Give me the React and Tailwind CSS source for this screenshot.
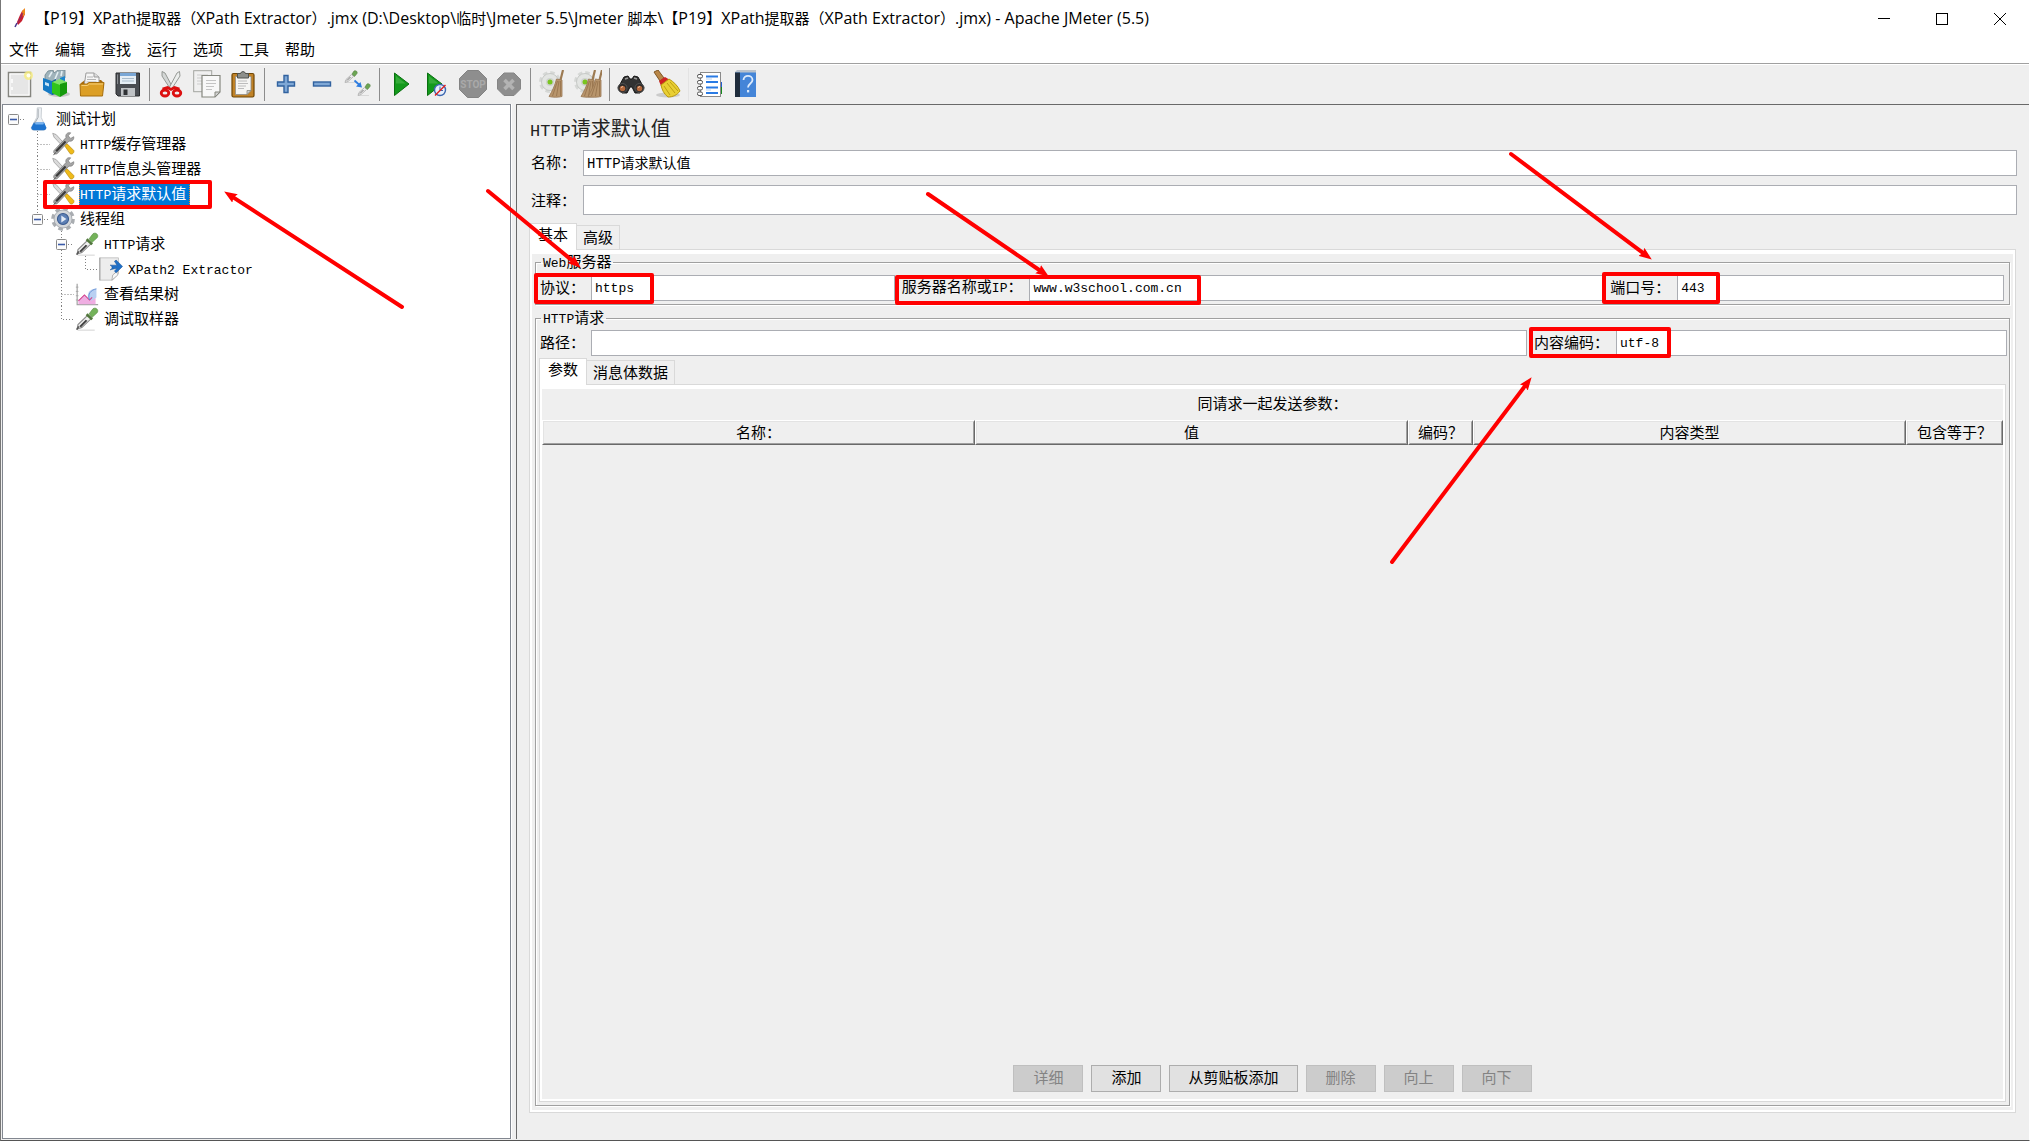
import clsx from 'clsx';

const MENUS = ['文件', '编辑', '查找', '运行', '选项', '工具', '帮助'];

const TITLE =
  '【P19】XPath提取器（XPath Extractor）.jmx (D:\\Desktop\\临时\\Jmeter 5.5\\Jmeter 脚本\\【P19】XPath提取器（XPath Extractor）.jmx) - Apache JMeter (5.5)';

function Mixed({ text, latin = 'text-[13px] font-["Liberation_Mono",monospace]' }) {
  return text.split(/([\x20-\x7e]+)/).map((part, i) =>
    i % 2 ? (
      <span key={i} className={latin}>
        {part}
      </span>
    ) : (
      part
    ),
  );
}

function Svg({ size = 28, children }) {
  return (
    <svg viewBox="0 0 28 28" width={size} height={size} className="shrink-0" aria-hidden="true">
      {children}
    </svg>
  );
}

function NewIcon() {
  return (
    <>
      <rect x="2.5" y="2.5" width="22" height="24" fill="#ececec" stroke="#85857f" strokeWidth="1.5" />
      <rect x="4" y="4" width="19" height="21" fill="#e6e6e6" stroke="#fff" />
      <path d="M6 9v4M6 17v3" stroke="#fff" strokeWidth="1.5" />
      <circle cx="22.500" cy="5.500" r="4.500" fill="#f7ee7e" opacity=".8" />
      <circle cx="22.500" cy="5.500" r="2" fill="#fffef0" />
    </>
  );
}

function TemplatesIcon() {
  return (
    <>
      <ellipse cx="17" cy="24" rx="11" ry="3" fill="#000" opacity=".18" />
      <path d="M3 5l3-4 5-1 1 3 4-3h7v8l-7 6-13-3z" fill="#9fb3bb" stroke="#6d848d" strokeWidth=".8" />
      <path d="M7 7l3-5M13 9l3-7M19 6l1-5" stroke="#e4eef2" strokeWidth="1.6" />
      <path d="M1 8l9 3v14l-9-5z" fill="#1579c4" />
      <path d="M10 11l4-2v15l-4 1z" fill="#0b5c9e" />
      <path d="M3 12l4 1.500v3L3 15z" fill="#c9e4f6" />
      <path d="M18 8l5-2v10h-5z" fill="#1d85cc" />
      <path d="M10 12l8 1v14l-8-4z" fill="#2fc51a" />
      <path d="M10 12l8-3 7 3-7 3z" fill="#7fe26a" />
      <path d="M18 14l7-2v11l-7 4z" fill="#169a0c" />
    </>
  );
}

function OpenIcon() {
  return (
    <>
      <path d="M3 13l4-3h16l3 3v5H3z" fill="#a86a0c" />
      <path d="M8 3h8l5 4v10H6z" fill="#f6f6f6" stroke="#9b9b9b" />
      <path d="M16 3v4h5" fill="#ddd" stroke="#9b9b9b" />
      <path d="M9 7h6M9 9.500h9M8.500 12h10" stroke="#b4b4b4" />
      <path d="M2 14h7l2-1.500h15L24.500 26h-22z" fill="#dc9f26" stroke="#a86f0d" />
      <path d="M3.500 15.500h6l2-1.500H25" stroke="#f6cf78" fill="none" />
    </>
  );
}

function SaveIcon() {
  return (
    <>
      <path d="M2 3h23.500v23H4l-2-2z" fill="#4a4d52" stroke="#2a2c2f" />
      <path d="M6 3h16v11H6z" fill="#e6eef5" />
      <path d="M6 3h16v3H6z" fill="#7aa7d6" />
      <path d="M8 8.500h12M8 11h12" stroke="#a9bccc" />
      <path d="M7 18h14v8H7z" fill="#bfc2c5" />
      <path d="M9.500 19.500h4V25h-4z" fill="#303235" />
      <path d="M3.500 4.500V14" stroke="#8a8d91" />
    </>
  );
}

function CutIcon() {
  return (
    <>
      <path d="M5 1.500l3 1.500 8 15-2 2L5 6z" fill="#d3d6d5" stroke="#80847f" strokeWidth=".8" />
      <path d="M22.500 1.500L20 3l-8 15 2 2 9-14z" fill="#eceeed" stroke="#80847f" strokeWidth=".8" />
      <ellipse cx="8" cy="23" rx="3.800" ry="3" fill="none" stroke="#dc1010" strokeWidth="2.800" />
      <ellipse cx="20" cy="23" rx="3.800" ry="3" fill="none" stroke="#dc1010" strokeWidth="2.800" />
      <path d="M5.500 19l5-1.500 3.500 2 3.500-2 5 1.500" fill="none" stroke="#dc1010" strokeWidth="2.600" />
    </>
  );
}

function CopyIcon() {
  return (
    <>
      <rect x=".7" y=".7" width="18" height="21" fill="#f0f0f0" stroke="#a3a5a0" />
      <path d="M4 5h11M4 8h11M4 11h6M4 14h6" stroke="#ccc" />
      <path d="M9 5.500h18V22l-5 5H9z" fill="#f8f8f8" stroke="#85877f" strokeWidth="1.200" />
      <path d="M13 10.500h10M13 13.500h10M13 16.500h8M13 19.500h6" stroke="#c4c4c4" />
      <path d="M27 22h-5v5z" fill="#d2d2d2" stroke="#85877f" />
    </>
  );
}

function PasteIcon() {
  return (
    <>
      <rect x="3" y="3.500" width="22" height="23.500" rx="1.500" fill="#c08227" stroke="#6f4706" strokeWidth="1.200" />
      <path d="M6.500 6.500h15.500v14l-4 4H6.500z" fill="#f5f5f3" stroke="#8e8e8a" strokeWidth=".8" />
      <path d="M9 11h9M9 13.500h10M9 16h8M9 18.500h6" stroke="#bcbcbc" />
      <path d="M22 20.500h-4v4z" fill="#cfcfcf" stroke="#85877f" strokeWidth=".8" />
      <path d="M8.500 3.500h3a2.600 2.600 0 0 1 5 0h3V8h-11z" fill="#8d8f8b" stroke="#50524e" />
    </>
  );
}

function PlusIcon() {
  return (
    <path d="M12 5.500h4V12h6.500v4H16v6.500h-4V16H5.500v-4H12z" fill="#7fa8d6" stroke="#31629f" strokeWidth="1.400" />
  );
}

function MinusIcon() {
  return <rect x="5.500" y="12" width="17" height="4" fill="#7fa8d6" stroke="#31629f" strokeWidth="1.400" />;
}

function Pipette() {
  return (
    <>
      <path d="M3 27h20" stroke="#d4d4d4" strokeWidth="1.200" />
      <path d="M2.500 25.500l1-5L15 9.500l4 4L8 24z" fill="#f0f0f0" stroke="#8b8b8b" strokeWidth="1.300" />
      <path d="M5 22.500l7.500-7.500 2 1L7 23.500z" fill="#3f3f3f" />
      <path d="M2 26.500l2.500-4" stroke="#555" strokeWidth="1.800" />
      <path d="M13.500 8.500l6.500 6" stroke="#51773b" strokeWidth="3" />
      <path d="M16.500 8l4.500-6c3-2 7 1 5 4.500L20 12z" fill="#74b35a" stroke="#578f42" strokeWidth=".8" />
    </>
  );
}

function SmallPipette() {
  return (
    <>
      <path d="M2 12.500h10" stroke="#d8d8d8" />
      <path d="M1 12.500l1-3 5.500-5 2 2L4 11.500z" fill="#ececec" stroke="#a8a8a8" strokeWidth=".8" />
      <path d="M3 10.500l3.500-3.500" stroke="#777" />
      <path d="M8 4l2-3c1.500-1 4 .5 3 2.500L10.500 6.500z" fill="#6ba553" stroke="#55803f" strokeWidth=".6" />
    </>
  );
}

function ToggleIcon() {
  return (
    <>
      <SmallPipette />
      <g transform="translate(13 13)">
        <SmallPipette />
      </g>
      <path d="M10.500 10.500l5 4.500" stroke="#2f7de0" strokeWidth="1.800" />
      <path d="M18 17.500l-6-1 4.500-4.500z" fill="#2f7de0" />
    </>
  );
}

function PlayIcon() {
  return (
    <>
      <path d="M7.500 3L22 14 7.500 25.500z" fill="#139a1b" stroke="#0a6f10" strokeLinejoin="round" />
      <path d="M9 6l9.500 7.500H9z" fill="#4cb84f" opacity=".6" />
    </>
  );
}

function PlayNoTimerIcon() {
  return (
    <>
      <path d="M4.500 3L19 14 4.500 25.500z" fill="#139a1b" stroke="#0a6f10" strokeLinejoin="round" />
      <path d="M6 6l9.500 7.500H6z" fill="#4cb84f" opacity=".6" />
      <circle cx="17" cy="20" r="5.500" fill="#e8f0fb" stroke="#3d67b0" strokeWidth="1.400" />
      <path d="M17 16.500v4h3" stroke="#3d67b0" fill="none" />
      <path d="M12 25.500L22.500 15" stroke="#e02020" strokeWidth="1.500" />
    </>
  );
}

function StopIcon() {
  return (
    <>
      <path d="M8.500.5h11l8 8v11l-8 8h-11l-8-8v-11z" fill="#8e8e8e" stroke="#838383" />
      <text x="14" y="18" textAnchor="middle" fontSize="10" fontWeight="700" fontFamily="Roboto, sans-serif" fill="#a9a9a9">
        STOP
      </text>
    </>
  );
}

function ShutdownIcon() {
  return (
    <>
      <path d="M9 3h10l6.500 6.500v9.500L19 25.500H9L2.500 19V9.500z" fill="#8e8e8e" stroke="#858585" />
      <path d="M9.500 10l9 9M18.500 10l-9 9" stroke="#b3b3b3" strokeWidth="3.600" />
    </>
  );
}

function GearShape({ x }) {
  return (
    <g transform={`translate(${x} 0)`}>
      <circle cx="12" cy="12" r="9.500" fill="none" stroke="#d6d8d6" strokeWidth="3" strokeDasharray="4.500 2.960" />
      <circle cx="12" cy="12" r="8.500" fill="#e3e5e3" stroke="#bfc2bf" strokeWidth=".8" />
      <circle cx="12" cy="12" r="4" fill="#cfd2cf" />
      <circle cx="12" cy="12" r="2.500" fill="#7ac520" />
    </g>
  );
}

function BroomShape({ x }) {
  return (
    <g transform={`translate(${x} 0)`}>
      <path d="M24 0l-2.500 10" stroke="#9c7a52" strokeWidth="2.200" />
      <path d="M17.500 9l5.500 1v16.500c-4 1-9 1-13 0 3-5 6-11 7.500-17.500z" fill="#b8956c" stroke="#977550" strokeWidth=".8" />
      <path d="M18.500 11l-5 15M20 11l-2.500 15M21.500 11v15" stroke="#8f6c46" strokeWidth=".7" />
    </g>
  );
}

function ClearIcon() {
  return (
    <>
      <GearShape x={0} />
      <BroomShape x={1} />
    </>
  );
}

function ClearAllIcon() {
  return (
    <>
      <GearShape x={-1} />
      <BroomShape x={-3} />
      <BroomShape x={4} />
    </>
  );
}

function SearchIcon() {
  return (
    <>
      <path d="M7 7l4-1 2 3h2l2-3 4 1 6 11-4 5h-5l-3-6h-2l-3 6H5l-4-5z" fill="#323232" stroke="#141414" />
      <path d="M8 9l3-1M17 8l3 1" stroke="#9a9a9a" strokeWidth="1.500" />
      <circle cx="5.500" cy="18" r="4.500" fill="#2a2a2a" stroke="#555" />
      <circle cx="22.500" cy="18" r="4.500" fill="#2a2a2a" stroke="#555" />
      <circle cx="5.500" cy="18.500" r="2.800" fill="#b4683c" />
      <circle cx="22.500" cy="18.500" r="2.800" fill="#b4683c" />
      <path d="M4 17.500l2-1M21 17.500l2-1" stroke="#eec3a5" />
    </>
  );
}

function ResetSearchIcon() {
  return (
    <>
      <ellipse cx="15" cy="25" rx="12" ry="2.500" fill="#000" opacity=".15" />
      <path d="M1 2l4-2 6 8-4 3z" fill="#b98748" stroke="#7f5522" />
      <path d="M6 11l6-4 5 3-9 6z" fill="#cf2222" />
      <path d="M8 15l8-6c5 3 9 7 11 12-3 4-7 6-12 6-4-3-6-7-7-12z" fill="#e9cf33" stroke="#b8980f" />
      <path d="M11 16l6 9M14 13l8 10M17 12l8 9" stroke="#b8980f" strokeWidth=".9" />
    </>
  );
}

function FunctionIcon() {
  return (
    <>
      <path d="M24 12h2v5h-2z" fill="#245dd0" />
      <path d="M24 17h2v7h-2z" fill="#158a1c" />
      <rect x="4.500" y="2.500" width="20" height="24" fill="#fff" stroke="#8a8a8a" />
      <path d="M10 6.500h12M10 12h12M10 17.500h12M10 23h12" stroke="#2a7be4" strokeWidth="2" />
      <path d="M10 9h6M10 20h5" stroke="#b8d2f2" />
      <g fill="#fff" stroke="#555">
        <rect x="1.500" y="4.500" width="5" height="3.500" rx="1.500" />
        <rect x="1.500" y="10.500" width="5" height="3.500" rx="1.500" />
        <rect x="1.500" y="16.500" width="5" height="3.500" rx="1.500" />
        <rect x="1.500" y="22" width="5" height="3.500" rx="1.500" />
      </g>
    </>
  );
}

function HelpIcon() {
  return (
    <>
      <path d="M3 2l2-2h19v3H3z" fill="#b9c2cc" />
      <rect x="3" y="2.500" width="21" height="24.500" fill="#4485d8" />
      <rect x="3" y="2.500" width="5" height="24.500" fill="#1f2c3c" />
      <path d="M11.500 10c0-5.500 9-5.500 9 0 0 3.500-4.500 3.500-4.500 7.500" fill="none" stroke="#dbeafc" strokeWidth="1.800" />
      <rect x="15" y="20" width="2.200" height="2.400" fill="#dbeafc" />
    </>
  );
}

const TOOLBAR = [
  [
    { label: '新建', icon: NewIcon },
    { label: '模板', icon: TemplatesIcon },
    { label: '打开', icon: OpenIcon },
    { label: '保存', icon: SaveIcon },
  ],
  [
    { label: '剪切', icon: CutIcon },
    { label: '复制', icon: CopyIcon },
    { label: '粘贴', icon: PasteIcon },
  ],
  [
    { label: '展开', icon: PlusIcon },
    { label: '折叠', icon: MinusIcon },
    { label: '切换', icon: ToggleIcon },
  ],
  [
    { label: '启动', icon: PlayIcon },
    { label: '不停顿开始', icon: PlayNoTimerIcon },
    { label: '停止', icon: StopIcon, disabled: true },
    { label: '关闭', icon: ShutdownIcon, disabled: true },
  ],
  [
    { label: '清除', icon: ClearIcon },
    { label: '清除全部', icon: ClearAllIcon },
  ],
  [
    { label: '查找', icon: SearchIcon },
    { label: '重置搜索', icon: ResetSearchIcon },
  ],
  [
    { label: '函数助手', icon: FunctionIcon },
    { label: '帮助', icon: HelpIcon },
  ],
];

function FlaskIcon() {
  return (
    <>
      <path d="M12 1h5l-.5 11L22 24c0 2-1 3-3 3H8c-2 0-3-1-3-3l6.500-12z" fill="#eef1f4" stroke="#c3c9cf" />
      <path d="M8 18h12l2.500 6c0 2-1 3-3 3H8c-2 0-3-1-3-3z" fill="#1f74cf" />
      <path d="M9 18h11l-1 2.500h-9z" fill="#7ab4f0" />
      <path d="M13 2v10l-4 7" stroke="#9aa2a9" fill="none" />
    </>
  );
}

function ToolsIcon() {
  return (
    <>
      <path d="M2 1.500l4 1.500L16 14l-2.500 2.500L3.500 6z" fill="#dadada" stroke="#929292" strokeWidth=".8" />
      <path d="M15.500 15.500l3-2 8 8c1 2.500-1.500 5-4 4z" fill="#efbb19" stroke="#b58607" strokeWidth=".8" />
      <path d="M23 1c-4-1-6.500 2-5.500 5.500L3.500 21.500c-1.500 3 1.500 5.500 4 3.500L21 10.500c3.500 1 6-1.500 5.500-5L23 7.500l-3-3z" fill="#a6a6a6" stroke="#777" strokeWidth=".8" />
      <path d="M6 22.500L17 11" stroke="#3b3b3b" strokeWidth="2.600" />
      <path d="M3 27c1-2 2-3 3-3.500" stroke="#666" />
    </>
  );
}

function ThreadGroupIcon() {
  return (
    <>
      <circle cx="14" cy="14" r="12" fill="none" stroke="#a9adb1" strokeWidth="3.600" strokeDasharray="5.400 4.020" />
      <circle cx="14" cy="14" r="10.500" fill="#d4d7da" stroke="#a0a4a8" />
      <circle cx="14" cy="14" r="6.500" fill="#5c7fb4" stroke="#3a5a8e" strokeWidth="1.200" />
      <path d="M12 10l6 4-6 4z" fill="#e3ebf6" />
    </>
  );
}

function ExtractorIcon() {
  return (
    <>
      <path d="M.7 1h22v18l-7 8H.7z" fill="#ededed" stroke="#bdbdbd" />
      <path d="M1 1v26" stroke="#a8a8a8" strokeWidth="1.400" />
      <path d="M15 27l1-6 6-5v5z" fill="#f8f8f8" stroke="#a8a8a8" />
      <path d="M13 9.500h8L18 5l2-1.500 7.500 7.500-7.500 7.500-2-2 3-3.500-8 2c3-2 3-4 0-5.500z" fill="#1f6fc6" stroke="#134f94" strokeWidth=".6" />
    </>
  );
}

function ResultsIcon() {
  return (
    <>
      <path d="M2.500 2v24.500H27" fill="none" stroke="#a3a3a3" strokeWidth="1.400" />
      <path d="M1 6h3M1 11h3M1 16h3M1 21h3" stroke="#a3a3a3" />
      <path d="M4 22l7-7 6 6 7-9v14H4z" fill="#efaee2" />
      <path d="M15 18c-1-6 4-11 10-10v10l-6 4z" fill="#b9d0f2" />
      <path d="M4 22l7-7 6 6 3-3" fill="none" stroke="#d0408a" strokeWidth="1.200" />
      <path d="M17 21c-3-7 2-12 8-13" fill="none" stroke="#5c8ad0" />
    </>
  );
}

// guides: one character per indent column. v = line, t = tee, l = elbow,
// r / m / n = open node: root, last child, first child.
const TREE = [
  { guides: 'r', icon: FlaskIcon, label: '测试计划' },
  { guides: ' t', icon: ToolsIcon, label: 'HTTP缓存管理器' },
  { guides: ' t', icon: ToolsIcon, label: 'HTTP信息头管理器' },
  { guides: ' t', icon: ToolsIcon, label: 'HTTP请求默认值', selected: true },
  { guides: ' m', icon: ThreadGroupIcon, label: '线程组' },
  { guides: '  n', icon: Pipette, label: 'HTTP请求' },
  { guides: '  vl', icon: ExtractorIcon, label: 'XPath2 Extractor' },
  { guides: '  t', icon: ResultsIcon, label: '查看结果树' },
  { guides: '  l', icon: Pipette, label: '调试取样器' },
];

const GUIDE_PATHS = {
  ' ': '',
  v: 'M10.500 0V25',
  t: 'M10.500 0V25M10.500 13.500H23',
  l: 'M10.500 0V13.500H23',
  r: 'M17 13.500H23',
  m: 'M10.500 0V8M17 13.500H23',
  n: 'M10.500 0V8M10.500 19V25M17 13.500H23',
};

function Guide({ kind }) {
  const open = 'rmn'.includes(kind);
  return (
    <svg width="24" height="25" viewBox="0 0 24 25" className="shrink-0" aria-hidden="true">
      <path d={GUIDE_PATHS[kind]} fill="none" stroke="#808080" strokeDasharray="1 2" />
      {open && (
        <>
          <rect x="5.500" y="8.500" width="10" height="10" rx="1" fill="#fbfbfb" stroke="#8a8a8a" />
          <path d="M7 13.500h7" stroke="#3a5aa8" strokeWidth="1.600" />
        </>
      )}
    </svg>
  );
}

function TreeRow({ guides, icon: Icon, label, selected }) {
  return (
    <li role="treeitem" aria-selected={!!selected} className="flex h-[25px] items-center">
      {guides.split('').map((kind, i) => (
        <Guide key={i} kind={kind} />
      ))}
      <Svg size={24}>
        <Icon />
      </Svg>
      <span
        className={clsx(
          'ml-1 h-6 border border-dotted pr-[3px] leading-[20px] whitespace-nowrap',
          selected ? 'border-[#ff8728] bg-[#0078d7] text-white' : 'border-transparent',
        )}
      >
        <Mixed text={label} />
      </span>
    </li>
  );
}

function TitleBar() {
  return (
    <header className="flex h-[37px] shrink-0 items-center bg-white pl-3">
      <svg viewBox="0 0 14 22" width="14" height="22" aria-hidden="true">
        <path d="M2 19l2-4" stroke="#4a3a8c" strokeWidth="1.500" />
        <path d="M4 14l3-7 2-4 3-2v5l-3 7-4 4z" fill="#c8202f" />
        <path d="M9 3l3-3v6l-2 3z" fill="#ee8a1c" />
        <path d="M4 16l6-11" stroke="#7d2a7a" strokeWidth=".8" />
      </svg>
      <h1 className="ml-2 grow pb-[2px] leading-[20px] whitespace-pre">
        <Mixed text={TITLE} latin="text-[16px] font-['Open_Sans',sans-serif]" />
      </h1>
      <div className="flex self-stretch">
        <button aria-label="最小化" className="flex w-[58px] items-center justify-center">
          <svg width="12" height="12" aria-hidden="true">
            <path d="M0 5.500h12" stroke="#000" />
          </svg>
        </button>
        <button aria-label="最大化" className="flex w-[58px] items-center justify-center">
          <svg width="12" height="12" aria-hidden="true">
            <rect x=".5" y=".5" width="11" height="11" fill="none" stroke="#000" />
          </svg>
        </button>
        <button aria-label="关闭窗口" className="flex w-[58px] items-center justify-center">
          <svg width="12" height="12" aria-hidden="true">
            <path d="M0 0l12 12M12 0L0 12" stroke="#000" />
          </svg>
        </button>
      </div>
    </header>
  );
}

function MenuBar() {
  return (
    <nav className="flex h-[27px] shrink-0 items-center gap-4 border-b border-[#a0a0a0] bg-white pb-[2px] pl-2">
      {MENUS.map((m) => (
        <button key={m}>{m}</button>
      ))}
    </nav>
  );
}

function Toolbar() {
  return (
    <div role="toolbar" className="flex h-10 shrink-0 items-center border-t border-white pb-px pl-px">
      {TOOLBAR.map((group, i) => (
        <div key={i} className="flex items-center">
          {i > 0 && (
            <div className={clsx('mx-[3px] h-[33px] w-px', i === 6 ? 'bg-[#e3e3e3]' : 'bg-[#8c8c8c]')} />
          )}
          {group.map(({ label, icon: Icon, disabled }) => (
            <button key={label} aria-label={label} disabled={disabled} className="flex w-9 justify-center">
              <Svg>
                <Icon />
              </Svg>
            </button>
          ))}
        </div>
      ))}
    </div>
  );
}

function TextInput({ id, value = '', className = 'h-[26px] text-[13px]' }) {
  return (
    <input
      id={id}
      defaultValue={value}
      className={clsx(
        'w-full min-w-0 border border-[#abadb3] bg-white px-[3px] font-["Liberation_Mono","Noto_Sans_CJK_SC",monospace] outline-none',
        className,
      )}
    />
  );
}

function TabStrip({ tabs }) {
  return (
    <div role="tablist" className="flex items-end">
      <button
        role="tab"
        aria-selected="true"
        className="z-10 -mb-px h-[27px] border border-b-0 border-[#d9d9d9] bg-white px-2 pb-[6px] leading-[20px]"
      >
        {tabs[0]}
      </button>
      <button
        role="tab"
        aria-selected="false"
        className="h-6 border border-b-0 border-l-0 border-[#d9d9d9] px-[6px] pb-px leading-[20px]"
      >
        {tabs[1]}
      </button>
    </div>
  );
}

function TabPane({ className, children }) {
  return (
    <div className={clsx('flex grow flex-col border border-[#d9d9d9]', className)}>
      <div className="flex grow flex-col border-2 border-t-4 border-white">{children}</div>
    </div>
  );
}

function Group({ title, className, children }) {
  return (
    <fieldset
      className={clsx(
        'mx-[3px] min-w-0 border border-[#a0a0a0] shadow-[1px_1px_0_#fff,inset_1px_1px_0_#fff]',
        className,
      )}
    >
      <legend className="ml-[5px] h-4 px-[2px] leading-[14px]">
        <Mixed text={title} />
      </legend>
      {children}
    </fieldset>
  );
}

function HeaderCell({ children, className }) {
  return (
    <th
      scope="col"
      className={clsx('border border-t-white border-r-[#696969] border-b-[#696969] border-l-white p-0 font-normal', className)}
    >
      <span className="block border border-t-[#e3e3e3] border-r-[#a0a0a0] border-b-[#a0a0a0] border-l-[#e3e3e3] pb-[2px] leading-[19px]">
        {children}
      </span>
    </th>
  );
}

function ParamsTable() {
  return (
    <table className="w-full table-fixed border-separate border-spacing-0">
      <caption className="h-[31px] leading-[28px]">同请求一起发送参数：</caption>
      <thead>
        <tr>
          <HeaderCell>名称：</HeaderCell>
          <HeaderCell>值</HeaderCell>
          <HeaderCell className="w-[65px]">编码？</HeaderCell>
          <HeaderCell>内容类型</HeaderCell>
          <HeaderCell className="w-[97px]">包含等于？</HeaderCell>
        </tr>
      </thead>
    </table>
  );
}

const ACTIONS = [
  { label: '详细', disabled: true },
  { label: '添加' },
  { label: '从剪贴板添加' },
  { label: '删除', disabled: true },
  { label: '向上', disabled: true },
  { label: '向下', disabled: true },
];

function Actions() {
  return (
    <div className="mt-auto flex justify-center gap-2 pb-[7px]">
      {ACTIONS.map(({ label, disabled }) => (
        <button
          key={label}
          disabled={disabled}
          className="h-[27px] min-w-[70px] border border-[#adadad] bg-[#e1e1e1] px-[18px] pb-[3px] leading-[22px] disabled:border-[#bfbfbf] disabled:bg-[#ccc] disabled:text-[#838383]"
        >
          {label}
        </button>
      ))}
    </div>
  );
}

function RequestDefaults() {
  return (
    <main className="flex grow flex-col border-t border-l border-[#696969] pr-3 pb-[26px] pl-3">
      <h2 className="flex h-[45px] items-center pt-[3px] pl-px text-[20px] text-[#222]">
        <span>
          <Mixed text="HTTP请求默认值" latin='text-[17px] font-["Liberation_Mono",monospace]' />
        </span>
      </h2>
      <div className="flex items-center pl-[2px]">
        <label htmlFor="name" className="w-[52px] shrink-0 pb-[2px]">
          名称：
        </label>
        <TextInput id="name" value="HTTP请求默认值" className="h-[26px] pb-[2px] text-[14px]" />
      </div>
      <div className="mt-[9px] mb-2 flex items-center pl-[2px]">
        <label htmlFor="comments" className="w-[52px] shrink-0">
          注释：
        </label>
        <TextInput id="comments" className="h-[30px] text-[14px]" />
      </div>

      <TabStrip tabs={['基本', '高级']} />
      <TabPane className="mr-px">
        <Group title="Web服务器">
          <div className="grid grid-cols-[auto_304fr_auto_574fr_auto_327fr] items-center pt-[5px] pr-[5px] pb-[3px]">
            <label htmlFor="protocol" className="pr-[6px] pb-[2px] pl-1">
              协议：
            </label>
            <TextInput id="protocol" value="https" />
            <label htmlFor="server" className="px-[7px] pb-[2px] whitespace-nowrap">
              <Mixed text="服务器名称或IP：" />
            </label>
            <TextInput id="server" value="www.w3school.com.cn" />
            <label htmlFor="port" className="px-[7px] pb-[2px]">
              端口号：
            </label>
            <TextInput id="port" value="443" />
          </div>
        </Group>

        <Group title="HTTP请求" className="mt-[5px] mb-[4px] grow">
          <div className="flex h-full flex-col">
            <div className="grid grid-cols-[auto_936fr_auto_391fr] items-center pt-1 pr-[2px] pb-[2px]">
              <label htmlFor="path" className="pr-[6px] pb-[2px] pl-1">
                路径：
              </label>
              <TextInput id="path" />
              <label htmlFor="encoding" className="px-[7px] pb-[2px]">
                内容编码：
              </label>
              <TextInput id="encoding" value="utf-8" />
            </div>
            <div className="mx-[3px] mb-[3px] flex grow flex-col">
              <TabStrip tabs={['参数', '消息体数据']} />
              <TabPane>
                <ParamsTable />
                <Actions />
              </TabPane>
            </div>
          </div>
        </Group>
      </TabPane>
    </main>
  );
}

const BOXES = [
  { x: 45, y: 182, w: 165, h: 25 },
  { x: 536, y: 275, w: 116, h: 27 },
  { x: 897, y: 277, w: 302, h: 26 },
  { x: 1604, y: 274, w: 114, h: 28 },
  { x: 1531, y: 329, w: 138, h: 27 },
];

const ARROWS = [
  { from: [402, 307], to: [225, 192] },
  { from: [488, 191], to: [580, 267] },
  { from: [928, 194], to: [1048, 276] },
  { from: [1511, 154], to: [1651, 259] },
  { from: [1392, 562], to: [1531, 378] },
];

function Annotations() {
  return (
    <svg className="pointer-events-none absolute top-0 -left-px z-20 h-full w-full" aria-hidden="true">
      <defs>
        <marker id="head" markerUnits="userSpaceOnUse" markerWidth="14" markerHeight="10" refX="12" refY="5" orient="auto">
          <path d="M0 0l13 5-13 5 2-5z" fill="#f00" />
        </marker>
      </defs>
      <g fill="none" stroke="#f00" strokeWidth="4" strokeLinejoin="round" strokeLinecap="round">
        {BOXES.map((b) => (
          <rect key={b.x} x={b.x} y={b.y} width={b.w} height={b.h} />
        ))}
        {ARROWS.map(({ from, to }) => {
          // stop the shaft short so that the tip stays sharp
          const len = Math.hypot(to[0] - from[0], to[1] - from[1]);
          const k = (len - 8) / len;
          return (
            <g key={from[0]}>
              <line x1={from[0]} y1={from[1]} x2={from[0] + (to[0] - from[0]) * k} y2={from[1] + (to[1] - from[1]) * k} />
              <line x1={from[0]} y1={from[1]} x2={to[0]} y2={to[1]} stroke="none" markerEnd="url(#head)" />
            </g>
          );
        })}
      </g>
    </svg>
  );
}

export default function App() {
  return (
    <div className="relative flex h-screen flex-col border-r border-b border-l border-r-white border-b-[#555] border-l-[#777] bg-[#efefef] text-[15px] text-black font-['Noto_Sans_CJK_SC',sans-serif]">
      <TitleBar />
      <MenuBar />
      <Toolbar />
      <div className="flex min-h-0 grow pb-px pl-px">
        <aside className="w-[509px] shrink-0 border border-[#828790] bg-white pt-px">
          <ul role="tree" aria-label="测试计划">
            {TREE.map((row) => (
              <TreeRow key={row.label} {...row} />
            ))}
          </ul>
        </aside>
        <div className="w-[5px] shrink-0 border-l border-white" />
        <RequestDefaults />
      </div>
      <Annotations />
    </div>
  );
}
